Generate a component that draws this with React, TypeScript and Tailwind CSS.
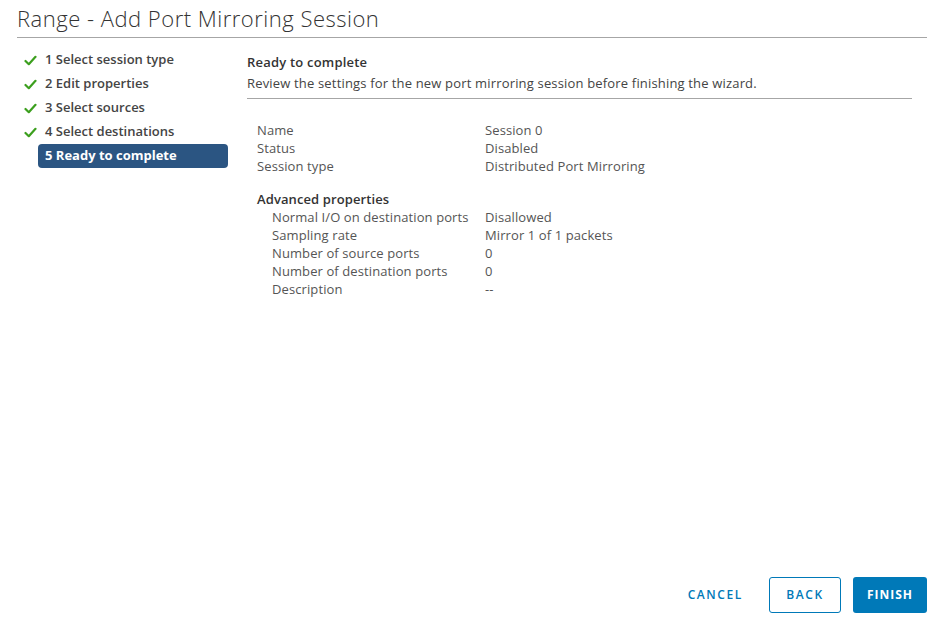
import React from 'react';

const steps = [
  { label: '1 Select session type', done: true },
  { label: '2 Edit properties', done: true },
  { label: '3 Select sources', done: true },
  { label: '4 Select destinations', done: true },
  { label: '5 Ready to complete', done: false },
];

const general = [
  ['Name', 'Session 0'],
  ['Status', 'Disabled'],
  ['Session type', 'Distributed Port Mirroring'],
];

const advanced = [
  ['Normal I/O on destination ports', 'Disallowed'],
  ['Sampling rate', 'Mirror 1 of 1 packets'],
  ['Number of source ports', '0'],
  ['Number of destination ports', '0'],
  ['Description', '--'],
];

const Check = () => (
  <svg width="13" height="11" viewBox="0 0 13 11" className="shrink-0">
    <path d="M1.5 6 L4.8 9.2 L11.5 1.8" fill="none" stroke="#3c9f1e" strokeWidth="2.2" strokeLinecap="round" strokeLinejoin="round" />
  </svg>
);

const App: React.FC = () => {
  return (
    <div className="w-[938px] h-[621px] bg-white flex flex-col text-[#333] font-['Open_Sans',sans-serif] overflow-hidden">
      <div className="pl-[17px] pr-[11px] pt-[4px]">
        <h1 className="text-[22px] leading-[28px] font-light tracking-[0.5px] text-[#333] pb-[5px] border-b border-[#a6a6a6]">
          Range - Add Port Mirroring Session
        </h1>
      </div>

      <div className="flex flex-1 min-h-0">
        <nav className="w-[247px] shrink-0 pt-[10px] pl-[24px]">
          {steps.map((s) =>
            s.done ? (
              <div key={s.label} className="h-[24px] flex items-center gap-[8px] text-[13px] font-semibold text-[#444]">
                <Check />
                <span>{s.label}</span>
              </div>
            ) : (
              <div key={s.label} className="h-[24px] ml-[14px] w-[190px] rounded-[4px] bg-[#2b5582] flex items-center px-[7px] text-[13px] font-bold text-white">
                {s.label}
              </div>
            )
          )}
        </nav>

        <main className="flex-1 pt-[15px] pr-[26px]">
          <div className="border-b border-[#a6a6a6] pb-[6px]">
            <div className="text-[13px] font-semibold leading-[18px] tracking-[0.2px] text-[#333]">Ready to complete</div>
            <div className="text-[13px] leading-[18px] mt-[3px] tracking-[0.17px] text-[#444]">
              Review the settings for the new port mirroring session before finishing the wizard.
            </div>
          </div>

          <div className="pl-[10px] pt-[23px] text-[13px] tracking-[0.1px] text-[#555]">
            {general.map(([k, v]) => (
              <div key={k} className="flex h-[18px] items-center">
                <div className="w-[228px]">{k}</div>
                <div>{v}</div>
              </div>
            ))}
            <div className="mt-[15px] h-[18px] flex items-center font-semibold text-[#333]">Advanced properties</div>
            {advanced.map(([k, v]) => (
              <div key={k} className="flex h-[18px] items-center">
                <div className="w-[228px] pl-[15px]">{k}</div>
                <div>{v}</div>
              </div>
            ))}
          </div>
        </main>
      </div>

      <div className="flex justify-end items-center gap-[12px] pr-[11px] pb-[8px]">
        <button className="h-[36px] px-[12px] text-[12px] font-semibold tracking-[1.6px] text-[#0079b8]">CANCEL</button>
        <button className="h-[36px] w-[72px] ml-[2px] rounded-[3px] border border-[#0079b8] text-[12px] font-semibold tracking-[1.6px] text-[#0079b8]">BACK</button>
        <button className="h-[36px] w-[74px] rounded-[3px] bg-[#0079b8] text-[12px] font-bold tracking-[1px] text-white">FINISH</button>
      </div>
    </div>
  );
};

export default App;
